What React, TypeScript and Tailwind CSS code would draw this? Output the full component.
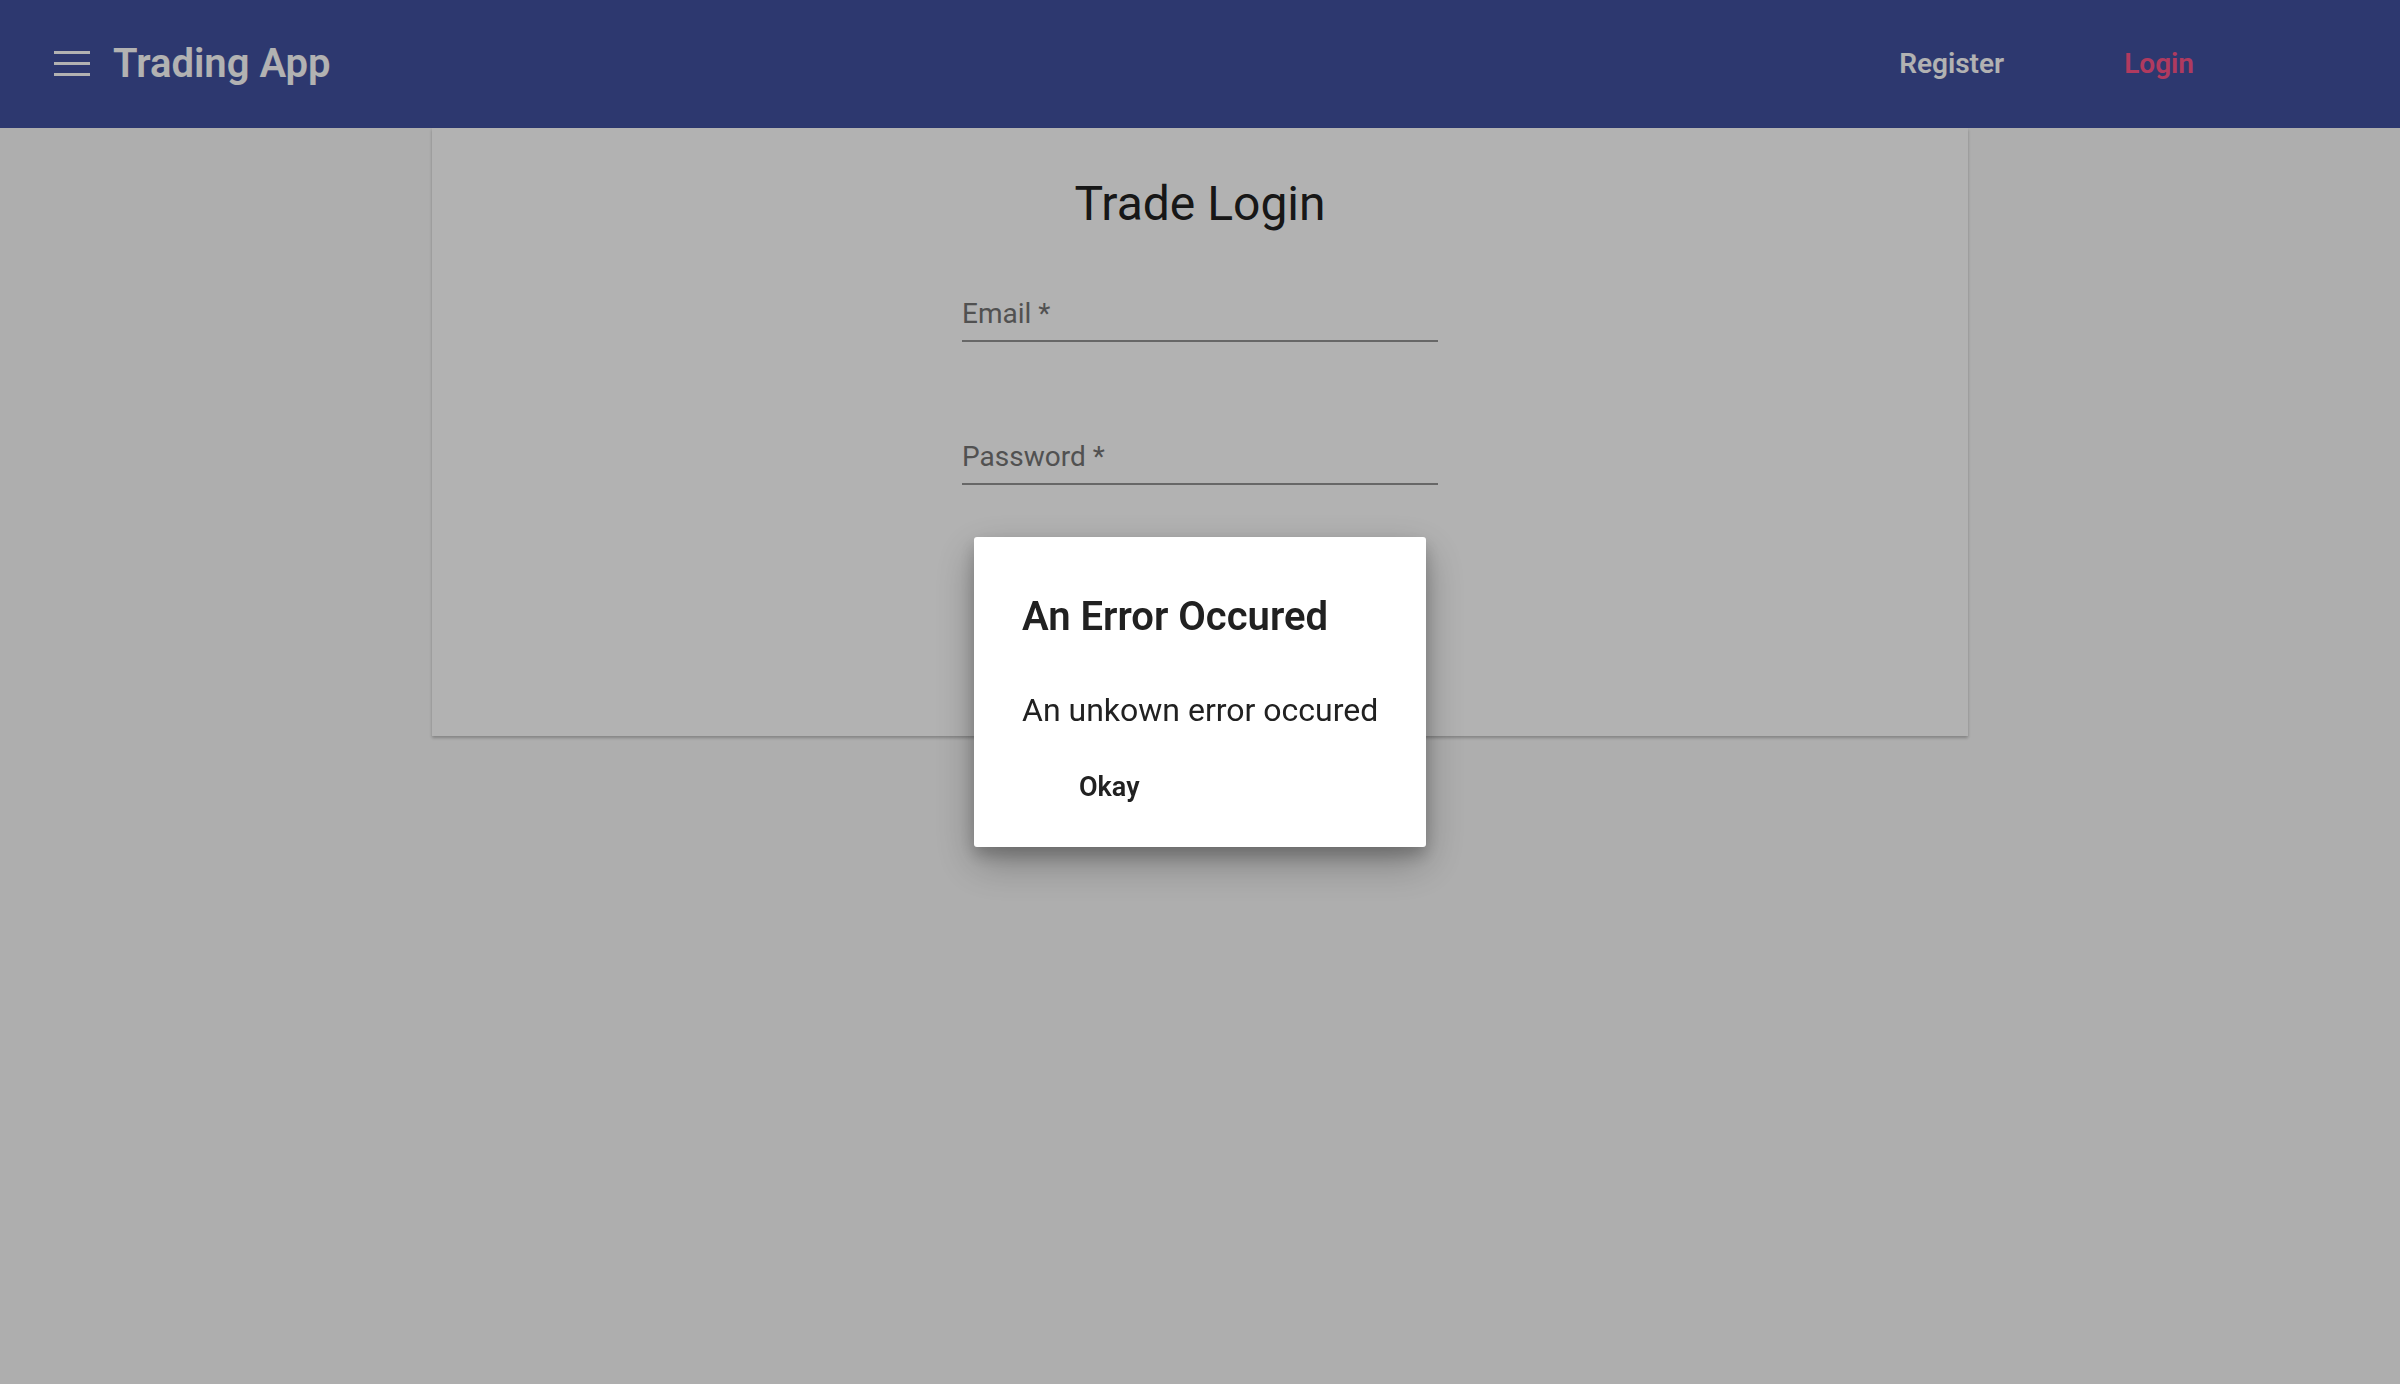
const font = { fontFamily: 'Roboto, "Liberation Sans", sans-serif' }

function Field({ label, className }: { label: string; className?: string }) {
  return (
    <div className={`w-[476px] ${className ?? ''}`}>
      <div className="text-[28px] leading-none text-[#757575]">{label} *</div>
      <div className="mt-[12px] h-[2px] bg-[#949494]" />
    </div>
  )
}

export default function App() {
  return (
    <div className="relative min-h-[1384px] bg-[#fafafa]" style={font}>
      <header className="flex h-[128px] items-center bg-[#41519f] pl-[54px] pr-[206px] text-white">
        <svg width="36" height="26" viewBox="0 0 36 26" className="mr-[23px]">
          <rect x="0" y="0" width="36" height="3" fill="currentColor" />
          <rect x="0" y="11" width="36" height="3" fill="currentColor" />
          <rect x="0" y="22" width="36" height="3" fill="currentColor" />
        </svg>
        <div className="text-[40px] font-semibold leading-none">Trading App</div>
        <div className="ml-auto flex items-center gap-[120px] text-[28px] font-semibold leading-none">
          <button>Register</button>
          <button className="text-[#fc5488]">Login</button>
        </div>
      </header>

      <main className="mx-auto flex h-[608px] w-[1536px] flex-col items-center bg-white pt-[52px] shadow-[0_2px_3px_rgba(0,0,0,0.25)]">
        <h1 className="text-[48px] leading-none text-[#212121]">Trade Login</h1>
        <Field label="Email" className="mt-[72px]" />
        <Field label="Password" className="mt-[101px]" />
      </main>

      <div className="fixed inset-0 flex items-center justify-center bg-black/30">
        <div className="flex w-[452px] flex-col rounded-[3px] bg-white pb-[46px] pl-[48px] pt-[60px] text-[#212121] shadow-[0_16px_40px_rgba(0,0,0,0.3),0_8px_16px_rgba(0,0,0,0.2)]">
          <h2 className="text-[40px] font-semibold leading-none">An Error Occured</h2>
          <p className="mt-[57px] text-[32px] leading-none">An unkown error occured</p>
          <button className="ml-[57px] mt-[48px] self-start text-[27px] font-semibold leading-none">Okay</button>
        </div>
      </div>
    </div>
  )
}
